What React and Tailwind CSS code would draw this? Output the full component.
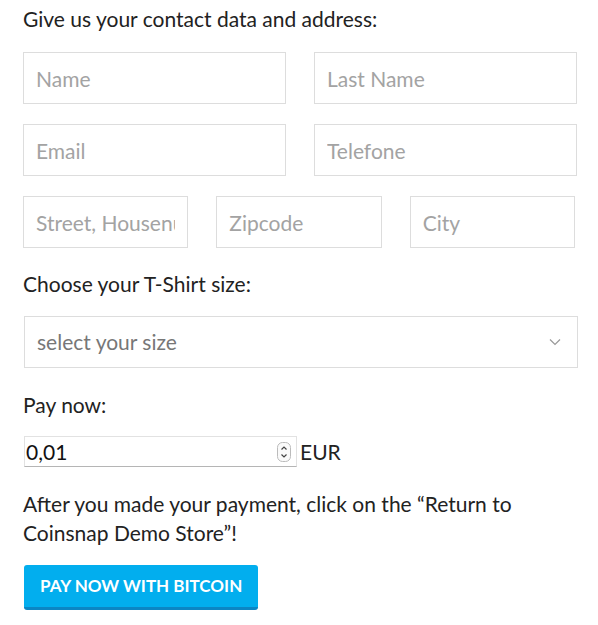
import React from 'react';

const inputCls =
  "h-[52px] w-full min-w-0 border border-[#dddddd] bg-white px-3 text-[21px] text-[#333] outline-none placeholder:text-[#a3a3a3]";

const App = () => {
  return (
    <div className="min-h-screen bg-white font-['Lato',sans-serif] text-[#222]">
      <form className="flex w-[578px] flex-col pl-[23px] pt-1" onSubmit={(e) => e.preventDefault()}>
        <p className="text-[21px] leading-[29px]">Give us your contact data and address:</p>

        {/* contact fields */}
        <div className="mt-[19px] grid w-[554px] grid-cols-2 gap-x-[28px] gap-y-5">
          <input className={inputCls} placeholder="Name" />
          <input className={inputCls} placeholder="Last Name" />
          <input className={inputCls} placeholder="Email" />
          <input className={inputCls} placeholder="Telefone" />
        </div>
        <div className="mt-5 grid w-[552px] grid-cols-3 gap-x-[28px]">
          <input className={inputCls} placeholder="Street, Housenumber" />
          <input className={inputCls} placeholder="Zipcode" />
          <input className={inputCls} placeholder="City" />
        </div>

        <p className="mt-[21px] text-[21px] leading-[29px]">Choose your T-Shirt size:</p>
        <div className="mt-[18px] ml-px flex h-[52px] items-center justify-between border border-[#dddddd] pl-3 pr-4">
          <span className="text-[21px] text-[#777]">select your size</span>
          <svg width="12" height="8" viewBox="0 0 12 8" fill="none" stroke="#999" strokeWidth="1.2">
            <path d="M1 1.5l5 5 5-5" />
          </svg>
        </div>

        <p className="mt-[22px] text-[21px] leading-[29px]">Pay now:</p>
        <div className="mt-[17px] ml-px flex items-center gap-[3px]">
          <div className="flex h-[31px] w-[273px] items-center justify-between border border-[#e2e2e2] border-b-[#b5b5b5] pl-px pr-[5px]">
            <span className="text-[21px] text-[#111]">0,01</span>
            <svg width="14" height="20" viewBox="0 0 14 20" fill="none">
              <rect x="0.5" y="0.5" width="13" height="19" rx="5" stroke="#bbb" fill="#fafafa" />
              <path d="M4.5 7.5l2.5-2.5 2.5 2.5M4.5 12.5l2.5 2.5 2.5-2.5" stroke="#444" strokeWidth="1.2" />
            </svg>
          </div>
          <span className="text-[21px]">EUR</span>
        </div>

        <p className="mt-[21px] text-[21px] leading-[29px]">
          After you made your payment, click on the “Return to<br />Coinsnap Demo Store”!
        </p>

        <div className="mt-[18px] ml-px">
          <button
            type="submit"
            className="h-[45px] rounded-[3px] border-b-[3px] border-[#0b86c4] bg-[#02aeee] px-4 text-[17px] font-bold uppercase text-white"
          >
            Pay now with Bitcoin
          </button>
        </div>
      </form>
    </div>
  );
};

export default App;
